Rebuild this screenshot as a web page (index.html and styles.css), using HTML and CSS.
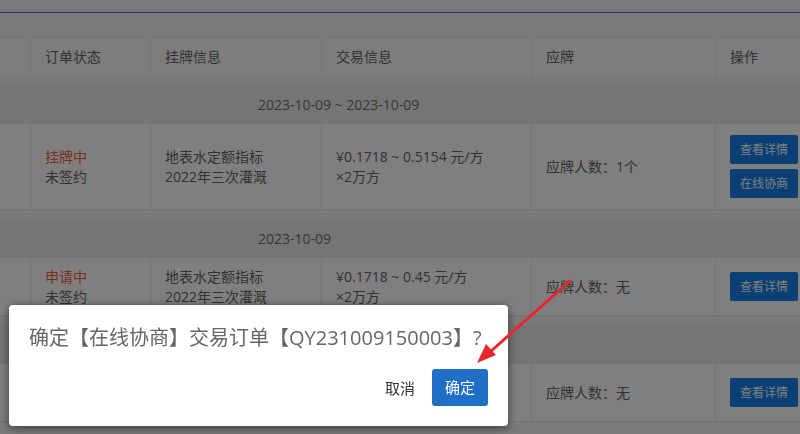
FILE: index.html
```html
<!DOCTYPE html>
<html lang="zh-CN">
<head>
    <meta charset="UTF-8">
    <meta name="viewport" content="width=device-width, initial-scale=1.0">
    <title>交易订单</title>
    <link rel="stylesheet" href="styles.css">
</head>
<body>

    <div class="page">
        <div class="tabbar"></div>

        <div class="order-table">
            <!-- Table head -->
            <div class="row head">
                <div class="cell"></div>
                <div class="cell">订单状态</div>
                <div class="cell">挂牌信息</div>
                <div class="cell">交易信息</div>
                <div class="cell">应牌</div>
                <div class="cell">操作</div>
            </div>

            <!-- Group 1 -->
            <div class="group">
                <div class="group-title">2023-10-09 ~ 2023-10-09</div>
                <div class="row data">
                    <div class="cell"></div>
                    <div class="cell">
                        <span class="status">挂牌中</span>
                        <span>未签约</span>
                    </div>
                    <div class="cell">
                        <span>地表水定额指标</span>
                        <span>2022年三次灌溉</span>
                    </div>
                    <div class="cell">
                        <span>¥0.1718 ~ 0.5154 元/方</span>
                        <span>×2万方</span>
                    </div>
                    <div class="cell">应牌人数：1个</div>
                    <div class="cell ops">
                        <a class="btn">查看详情</a>
                        <a class="btn">在线协商</a>
                    </div>
                </div>
            </div>

            <!-- Group 2 -->
            <div class="group">
                <div class="group-title">2023-10-09</div>
                <div class="row data">
                    <div class="cell"></div>
                    <div class="cell">
                        <span class="status">申请中</span>
                        <span>未签约</span>
                    </div>
                    <div class="cell">
                        <span>地表水定额指标</span>
                        <span>2022年三次灌溉</span>
                    </div>
                    <div class="cell">
                        <span>¥0.1718 ~ 0.45 元/方</span>
                        <span>×2万方</span>
                    </div>
                    <div class="cell">应牌人数：无</div>
                    <div class="cell ops">
                        <a class="btn">查看详情</a>
                    </div>
                </div>
            </div>

            <!-- Group 3 -->
            <div class="group">
                <div class="group-title">2023-10-09</div>
                <div class="row data">
                    <div class="cell"></div>
                    <div class="cell">
                        <span class="status">申请中</span>
                        <span>未签约</span>
                    </div>
                    <div class="cell">
                        <span>地表水定额指标</span>
                        <span>2022年三次灌溉</span>
                    </div>
                    <div class="cell">
                        <span>¥0.1718 ~ 0.45 元/方</span>
                        <span>×2万方</span>
                    </div>
                    <div class="cell">应牌人数：无</div>
                    <div class="cell ops">
                        <a class="btn">查看详情</a>
                    </div>
                </div>
            </div>
        </div>
    </div>

    <!-- Confirm dialog -->
    <div class="mask"></div>
    <div class="dialog">
        <p class="dialog-text">确定【在线协商】交易订单【QY231009150003】?</p>
        <div class="dialog-footer">
            <a class="btn-text">取消</a>
            <a class="btn-primary">确定</a>
        </div>
    </div>

    <!-- Annotation arrow -->
    <svg class="arrow" width="800" height="434" viewBox="0 0 800 434">
        <line x1="570" y1="281" x2="490" y2="352" stroke="#e8262b" stroke-width="3" stroke-linecap="round"/>
        <polygon points="477,363 496,355 486,344" fill="#e8262b"/>
    </svg>

</body>
</html>
```

FILE: styles.css
```css
/* Page */
body {
    font-family: "Open Sans", "Noto Sans CJK SC", sans-serif;
    font-size: 14px;
    color: #666;
    background-color: #f4f4f4;
    margin: 0;
    padding: 0;
    overflow: hidden;
}

.page {
    width: 800px;
    height: 434px;
    overflow: hidden;
}

.tabbar {
    height: 12px;
    border-bottom: 1px solid #2f7de0;
    margin-bottom: 24px;
}

/* Table */
.order-table {
    margin-left: -90px;
    width: 905px;
}

.row {
    display: grid;
    grid-template-columns: 120px 120px 171px 210px 184px 100px;
}

.cell {
    display: flex;
    flex-direction: column;
    justify-content: center;
    padding: 0 14px;
    border-left: 1px solid #e8e8e8;
    line-height: 20px;
}

.cell:first-child {
    border-left: none;
}

.head {
    height: 39px;
    background: #fbfbfb;
    border-top: 1px solid #ececec;
    box-sizing: border-box;
}

.head .cell {
    color: #666;
}

.group {
    margin-top: 9px;
}

.group-title {
    height: 39px;
    line-height: 39px;
    background: #ebebeb;
    padding-left: 348px;
    color: #727272;
}

.data {
    background: #fff;
    min-height: 58px;
    border-bottom: 1px solid #e8e8e8;
    box-sizing: border-box;
}

.data .cell {
    padding-top: 8px;
    padding-bottom: 8px;
}

.status {
    color: #f2603a;
}

.data .ops {
    gap: 5px;
    padding-top: 11px;
    padding-bottom: 11px;
}

.btn {
    display: block;
    width: 68px;
    height: 29px;
    line-height: 29px;
    text-align: center;
    font-size: 12px;
    color: #fff;
    background-color: #1580ea;
    border-radius: 2px;
    cursor: pointer;
}

/* Dialog */
.mask {
    position: fixed;
    top: 0;
    left: 0;
    width: 100%;
    height: 100%;
    background: rgba(0, 0, 0, 0.5);
}

.dialog {
    position: fixed;
    top: 305px;
    left: 9px;
    width: 499px;
    box-sizing: border-box;
    padding: 20px;
    background: #fff;
    border-radius: 4px;
    box-shadow: 0 2px 10px rgba(0, 0, 0, 0.55);
}

.dialog-text {
    margin: 0;
    font-size: 20px;
    line-height: 26px;
    color: #666;
}

.dialog-footer {
    display: flex;
    justify-content: flex-end;
    align-items: center;
    margin-top: 18px;
}

.btn-text {
    font-size: 15px;
    color: #333;
    margin-right: 17px;
    cursor: pointer;
}

.btn-primary {
    display: block;
    height: 37px;
    line-height: 37px;
    padding: 0 13px;
    font-size: 15px;
    color: #fff;
    background-color: #1f6fc6;
    border-radius: 3px;
    cursor: pointer;
}

/* Annotation */
.arrow {
    position: fixed;
    top: 0;
    left: 0;
    pointer-events: none;
}
```
